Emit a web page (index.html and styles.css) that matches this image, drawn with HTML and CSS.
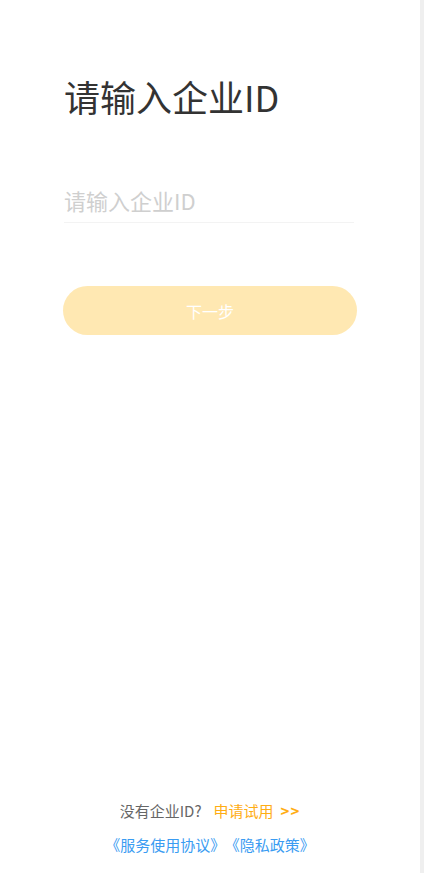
FILE: index.html
```html
<!DOCTYPE html>
<html lang="zh-CN">
<head>
<meta charset="utf-8">
<title>请输入企业ID</title>
<link rel="stylesheet" href="styles.css">
</head>
<body>
<div class="page">
  <main class="content">
    <h1 class="title">请输入企业ID</h1>
    <div class="field">
      <input class="input" type="text" placeholder="请输入企业ID">
    </div>
    <button class="btn" type="button">下一步</button>
  </main>
  <footer class="footer">
    <p class="apply"><span class="muted">没有企业ID?</span><a class="trial">申请试用<span class="arrows">&gt;&gt;</span></a></p>
    <p class="links"><a class="link">《服务使用协议》</a><a class="link">《隐私政策》</a></p>
  </footer>
</div>
</body>
</html>
```

FILE: styles.css
```css
html, body {
  margin: 0;
  padding: 0;
  background: #fff;
}
body {
  font-family: "Noto Sans CJK SC", "Noto Sans", sans-serif;
}
.page {
  box-sizing: border-box;
  width: 424px;
  height: 873px;
  border-right: 4px solid #efefef;
  display: flex;
  flex-direction: column;
}
.content {
  padding: 71px 64px 0 64px;
  display: flex;
  flex-direction: column;
}
.title {
  margin: 0;
  font-size: 36px;
  font-weight: 400;
  line-height: 50px;
  color: #333;
}
.field {
  margin-top: 57px;
  border-bottom: 1px solid #f3f3f3;
  margin-right: 2px;
}
.input {
  display: block;
  width: 100%;
  box-sizing: border-box;
  border: 0;
  outline: none;
  padding: 0;
  height: 44px;
  font-family: inherit;
  font-size: 22px;
  color: #333;
  background: transparent;
}
.input::placeholder {
  color: #cfcfcf;
}
.btn {
  margin-top: 63px;
  margin-left: -1px;
  width: 294px;
  height: 49px;
  border: 0;
  border-radius: 25px;
  background: #ffe8b2;
  color: #fff;
  font-family: inherit;
  font-size: 16px;
}
.footer {
  margin-top: auto;
  padding-bottom: 17px;
  text-align: center;
}
.apply {
  margin: 0;
  font-size: 15px;
  line-height: 22px;
}
.muted {
  color: #666;
  margin-right: 12px;
}
.trial {
  color: #ffad14;
}
.arrows {
  margin-left: 7px;
  letter-spacing: 1px;
  font-weight: 700;
}
.links {
  margin: 12px 0 0;
  font-size: 15px;
  line-height: 22px;
}
.link {
  color: #3a9cf2;
}
.link + .link {
  margin-left: 7px;
}
```
